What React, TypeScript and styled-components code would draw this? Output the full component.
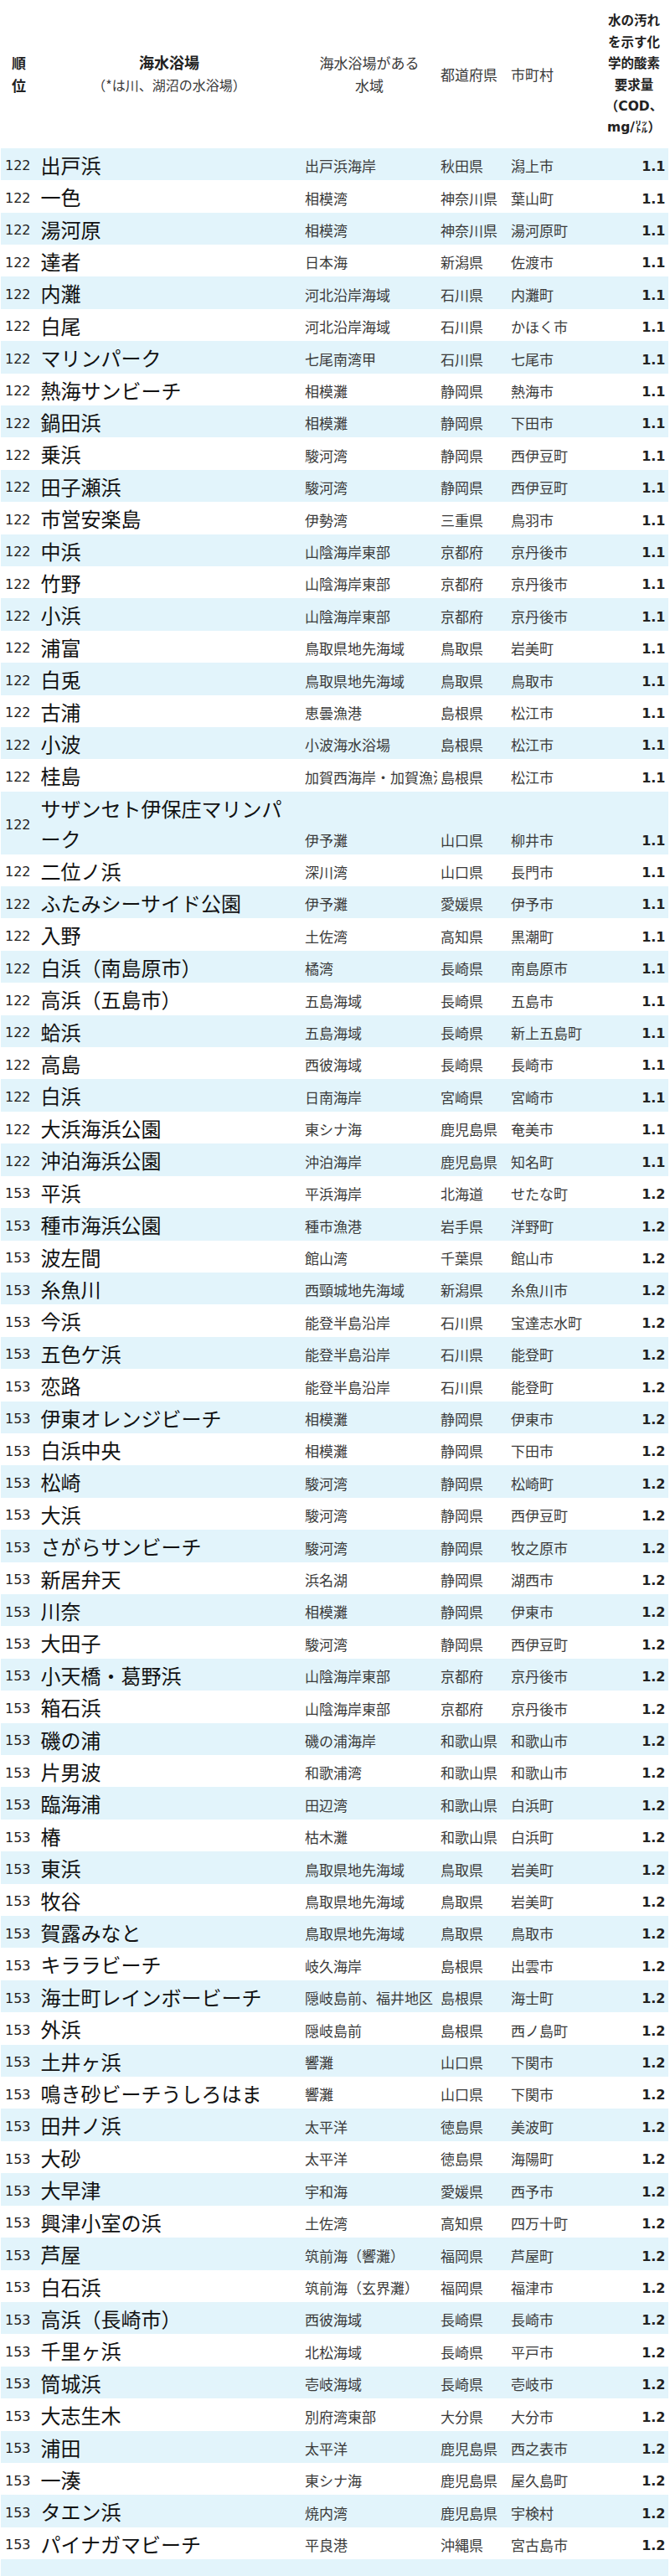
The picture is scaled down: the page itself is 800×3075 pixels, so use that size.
import React from 'react';
import styled, { createGlobalStyle } from 'styled-components';

const GlobalStyle = createGlobalStyle`
  html, body { margin: 0; padding: 0; background: #ffffff; }
  body { font-family: "Noto Sans CJK JP", "Noto Sans", sans-serif; }
`;

const COLS = '43px 316px 162px 84px 110px 82px';

type Beach = { rank: string; name: string; water: string; pref: string; city: string; value: string };

const raw122: [string, string, string, string][] = [
  ['出戸浜', '出戸浜海岸', '秋田県', '潟上市'],
  ['一色', '相模湾', '神奈川県', '葉山町'],
  ['湯河原', '相模湾', '神奈川県', '湯河原町'],
  ['達者', '日本海', '新潟県', '佐渡市'],
  ['内灘', '河北沿岸海域', '石川県', '内灘町'],
  ['白尾', '河北沿岸海域', '石川県', 'かほく市'],
  ['マリンパーク', '七尾南湾甲', '石川県', '七尾市'],
  ['熱海サンビーチ', '相模灘', '静岡県', '熱海市'],
  ['鍋田浜', '相模灘', '静岡県', '下田市'],
  ['乗浜', '駿河湾', '静岡県', '西伊豆町'],
  ['田子瀬浜', '駿河湾', '静岡県', '西伊豆町'],
  ['市営安楽島', '伊勢湾', '三重県', '鳥羽市'],
  ['中浜', '山陰海岸東部', '京都府', '京丹後市'],
  ['竹野', '山陰海岸東部', '京都府', '京丹後市'],
  ['小浜', '山陰海岸東部', '京都府', '京丹後市'],
  ['浦富', '鳥取県地先海域', '鳥取県', '岩美町'],
  ['白兎', '鳥取県地先海域', '鳥取県', '鳥取市'],
  ['古浦', '恵曇漁港', '島根県', '松江市'],
  ['小波', '小波海水浴場', '島根県', '松江市'],
  ['桂島', '加賀西海岸・加賀漁港', '島根県', '松江市'],
  ['サザンセト伊保庄マリンパーク', '伊予灘', '山口県', '柳井市'],
  ['二位ノ浜', '深川湾', '山口県', '長門市'],
  ['ふたみシーサイド公園', '伊予灘', '愛媛県', '伊予市'],
  ['入野', '土佐湾', '高知県', '黒潮町'],
  ['白浜（南島原市）', '橘湾', '長崎県', '南島原市'],
  ['高浜（五島市）', '五島海域', '長崎県', '五島市'],
  ['蛤浜', '五島海域', '長崎県', '新上五島町'],
  ['高島', '西彼海域', '長崎県', '長崎市'],
  ['白浜', '日南海岸', '宮崎県', '宮崎市'],
  ['大浜海浜公園', '東シナ海', '鹿児島県', '奄美市'],
  ['沖泊海浜公園', '沖泊海岸', '鹿児島県', '知名町'],
];

const raw153: [string, string, string, string][] = [
  ['平浜', '平浜海岸', '北海道', 'せたな町'],
  ['種市海浜公園', '種市漁港', '岩手県', '洋野町'],
  ['波左間', '館山湾', '千葉県', '館山市'],
  ['糸魚川', '西頸城地先海域', '新潟県', '糸魚川市'],
  ['今浜', '能登半島沿岸', '石川県', '宝達志水町'],
  ['五色ケ浜', '能登半島沿岸', '石川県', '能登町'],
  ['恋路', '能登半島沿岸', '石川県', '能登町'],
  ['伊東オレンジビーチ', '相模灘', '静岡県', '伊東市'],
  ['白浜中央', '相模灘', '静岡県', '下田市'],
  ['松崎', '駿河湾', '静岡県', '松崎町'],
  ['大浜', '駿河湾', '静岡県', '西伊豆町'],
  ['さがらサンビーチ', '駿河湾', '静岡県', '牧之原市'],
  ['新居弁天', '浜名湖', '静岡県', '湖西市'],
  ['川奈', '相模灘', '静岡県', '伊東市'],
  ['大田子', '駿河湾', '静岡県', '西伊豆町'],
  ['小天橋・葛野浜', '山陰海岸東部', '京都府', '京丹後市'],
  ['箱石浜', '山陰海岸東部', '京都府', '京丹後市'],
  ['磯の浦', '磯の浦海岸', '和歌山県', '和歌山市'],
  ['片男波', '和歌浦湾', '和歌山県', '和歌山市'],
  ['臨海浦', '田辺湾', '和歌山県', '白浜町'],
  ['椿', '枯木灘', '和歌山県', '白浜町'],
  ['東浜', '鳥取県地先海域', '鳥取県', '岩美町'],
  ['牧谷', '鳥取県地先海域', '鳥取県', '岩美町'],
  ['賀露みなと', '鳥取県地先海域', '鳥取県', '鳥取市'],
  ['キララビーチ', '岐久海岸', '島根県', '出雲市'],
  ['海士町レインボービーチ', '隠岐島前、福井地区', '島根県', '海士町'],
  ['外浜', '隠岐島前', '島根県', '西ノ島町'],
  ['土井ヶ浜', '響灘', '山口県', '下関市'],
  ['鳴き砂ビーチうしろはま', '響灘', '山口県', '下関市'],
  ['田井ノ浜', '太平洋', '徳島県', '美波町'],
  ['大砂', '太平洋', '徳島県', '海陽町'],
  ['大早津', '宇和海', '愛媛県', '西予市'],
  ['興津小室の浜', '土佐湾', '高知県', '四万十町'],
  ['芦屋', '筑前海（響灘）', '福岡県', '芦屋町'],
  ['白石浜', '筑前海（玄界灘）', '福岡県', '福津市'],
  ['高浜（長崎市）', '西彼海域', '長崎県', '長崎市'],
  ['千里ヶ浜', '北松海域', '長崎県', '平戸市'],
  ['筒城浜', '壱岐海域', '長崎県', '壱岐市'],
  ['大志生木', '別府湾東部', '大分県', '大分市'],
  ['浦田', '太平洋', '鹿児島県', '西之表市'],
  ['一湊', '東シナ海', '鹿児島県', '屋久島町'],
  ['タエン浜', '焼内湾', '鹿児島県', '宇検村'],
  ['パイナガマビーチ', '平良港', '沖縄県', '宮古島市'],
];

const beaches: Beach[] = [
  ...raw122.map(([name, water, pref, city]) => ({ rank: '122', name, water, pref, city, value: '1.1' })),
  ...raw153.map(([name, water, pref, city]) => ({ rank: '153', name, water, pref, city, value: '1.2' })),
];

const Page = styled.div`
  width: 797px;
  padding: 0 2px 0 1px;
`;

const HeaderRow = styled.div`
  display: grid;
  grid-template-columns: ${COLS};
  height: 176.7px;
  align-items: center;
  color: #333;
`;

const HeadCell = styled.div<{ $align?: 'left' | 'center'; $bold?: boolean }>`
  text-align: ${(p) => p.$align ?? 'center'};
  padding-left: ${(p) => (p.$align === 'left' ? '4px' : '0')};
  font-size: 17px;
  line-height: 27px;
  font-weight: ${(p) => (p.$bold ? 700 : 400)};
  color: ${(p) => (p.$bold ? '#222' : '#3a3a3a')};
  white-space: nowrap;
`;

const HeadTitle = styled.span`
  display: block;
  font-size: 18px;
  font-weight: 700;
  color: #222;
`;

const HeadNote = styled.span`
  display: block;
  font-size: 16px;
`;

const HeadValue = styled.div`
  text-align: center;
  padding-top: 2.5px;
  font-family: "DejaVu Sans", "Noto Sans CJK JP", sans-serif;
  font-size: 15.5px;
  line-height: 25.4px;
  font-weight: 700;
  color: #222;
  white-space: nowrap;
`;

const Row = styled.div<{ $alt: boolean }>`
  display: grid;
  grid-template-columns: ${COLS};
  min-height: 38.4px;
  background: ${(p) => (p.$alt ? '#e2f4fb' : '#ffffff')};
`;

const Rank = styled.div`
  align-self: center;
  padding: 5px 0 0 5px;
  font-family: "DejaVu Sans", sans-serif;
  font-size: 16px;
  line-height: 30px;
  color: #222;
`;

const Name = styled.div`
  padding: 2px 12px 0 4.5px;
  font-size: 24px;
  line-height: 36.4px;
  color: #111;
`;

const Info = styled.div`
  align-self: end;
  padding-left: 4px;
  font-size: 17px;
  line-height: 35px;
  color: #3a3a3a;
  white-space: nowrap;
  overflow: hidden;
`;

const Value = styled.div`
  align-self: end;
  text-align: right;
  padding-right: 3.5px;
  font-family: "DejaVu Sans", sans-serif;
  font-weight: 700;
  font-size: 16px;
  line-height: 32px;
  color: #222;
`;

const valueHeadLines = ['水の汚れ', 'を示す化', '学的酸素', '要求量', '（COD、', 'mg/㍑）'];

export default function App() {
  return (
    <>
      <GlobalStyle />
      <Page>
        <HeaderRow>
          <HeadCell $bold>
            順<br />位
          </HeadCell>
          <HeadCell>
            <HeadTitle>海水浴場</HeadTitle>
            <HeadNote>（*は川、湖沼の水浴場）</HeadNote>
          </HeadCell>
          <HeadCell>
            海水浴場がある<br />水域
          </HeadCell>
          <HeadCell $align="left">都道府県</HeadCell>
          <HeadCell $align="left">市町村</HeadCell>
          <HeadValue>
            {valueHeadLines.map((l, i) => (
              <React.Fragment key={i}>
                {l}
                {i < valueHeadLines.length - 1 && <br />}
              </React.Fragment>
            ))}
          </HeadValue>
        </HeaderRow>
        {beaches.map((b, i) => (
          <Row key={i} $alt={i % 2 === 0}>
            <Rank>{b.rank}</Rank>
            <Name>{b.name}</Name>
            <Info>{b.water}</Info>
            <Info>{b.pref}</Info>
            <Info>{b.city}</Info>
            <Value>{b.value}</Value>
          </Row>
        ))}
        <Row $alt={beaches.length % 2 === 0} />
      </Page>
    </>
  );
}
